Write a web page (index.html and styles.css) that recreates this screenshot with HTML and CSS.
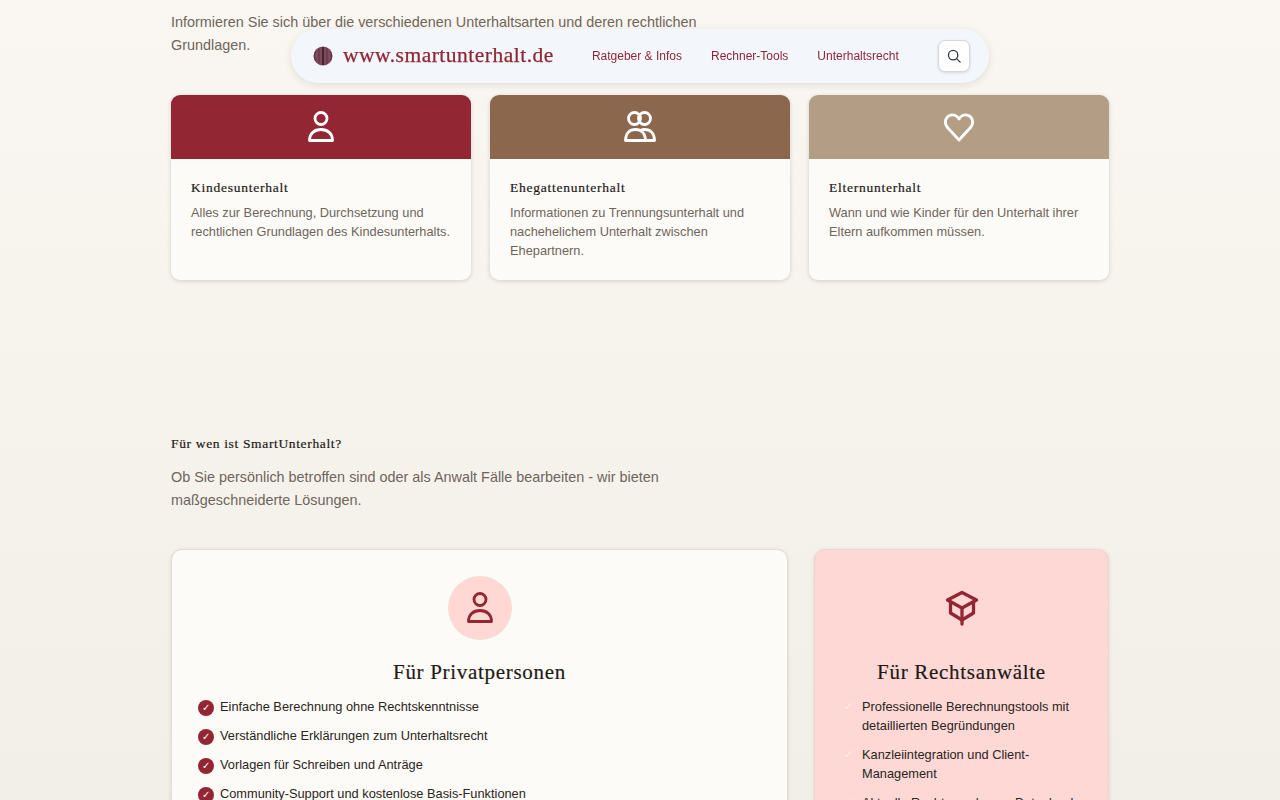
FILE: index.html
```html
<!DOCTYPE html>
<html lang="de">
<head>
    <meta charset="UTF-8">
    <meta name="viewport" content="width=device-width, initial-scale=1.0">
    <title>SmartUnterhalt</title>
    <link rel="stylesheet" href="styles.css">
</head>
<body>
    <div class="header">
        <a class="logo" href="#">
            <svg class="logo-icon" viewBox="0 0 20 20">
                <circle cx="10" cy="10" r="9.5" fill="#7d4a5c"/>
                <path d="M3 5a9 9 0 0 0 0 10M6 2.5v15M14 2.5v15M17 5a9 9 0 0 1 0 10" fill="none" stroke="#5f3145" stroke-width="1"/>
                <path d="M10 1v18" stroke="#2b1a20" stroke-width="1.4"/>
            </svg>
            <span class="logo-text">www.smartunterhalt.de</span>
        </a>
        <div class="menu">
            <a href="#">Ratgeber &amp; Infos</a>
            <a href="#">Rechner-Tools</a>
            <a href="#">Unterhaltsrecht</a>
        </div>
        <button class="search" type="button" aria-label="Suche">
            <svg viewBox="0 0 24 24" width="14" height="14" fill="none" stroke="#2f3542" stroke-width="2.2" stroke-linecap="round">
                <circle cx="10.5" cy="10.5" r="8"/>
                <path d="M16.5 16.5l6 6"/>
            </svg>
        </button>
    </div>

    <div class="container">
        <p class="lead lead-top">Informieren Sie sich über die verschiedenen Unterhaltsarten und deren rechtlichen Grundlagen.</p>

        <div class="topics">
            <div class="topic">
                <div class="topic-head red">
                    <svg class="icon-white" viewBox="0 0 32 32">
                        <circle cx="16" cy="7.500" r="6"/>
                        <path d="M4.500 29.500c0-7 5-11 11.500-11s11.500 4 11.500 11z"/>
                    </svg>
                </div>
                <div class="topic-body">
                    <h3>Kindesunterhalt</h3>
                    <p>Alles zur Berechnung, Durchsetzung und rechtlichen Grundlagen des Kindesunterhalts.</p>
                </div>
            </div>
            <div class="topic">
                <div class="topic-head brown">
                    <svg class="icon-white" viewBox="0 0 32 32">
                        <circle cx="10.500" cy="7.500" r="6"/>
                        <circle cx="20.500" cy="7.500" r="6"/>
                        <path d="M1.500 29.500c0-7 4-11 10-11s10 4 10 11z"/>
                        <path d="M16.500 19.500c1.300-.7 2.700-1 4-1 6 0 10 4 10 11h-9"/>
                    </svg>
                </div>
                <div class="topic-body">
                    <h3>Ehegattenunterhalt</h3>
                    <p>Informationen zu Trennungsunterhalt und nachehelichem Unterhalt zwischen Ehepartnern.</p>
                </div>
            </div>
            <div class="topic">
                <div class="topic-head sand">
                    <svg class="icon-white" viewBox="0 0 32 32">
                        <path d="M16 29 4.500 16.500C1 12.500 2 6.500 6.500 4.500c3.500-1.500 7.500-.3 9.500 3.500 2-3.800 6-5 9.500-3.500 4.500 2 5.500 8 2 12z"/>
                    </svg>
                </div>
                <div class="topic-body">
                    <h3>Elternunterhalt</h3>
                    <p>Wann und wie Kinder für den Unterhalt ihrer Eltern aufkommen müssen.</p>
                </div>
            </div>
        </div>

        <h4 class="section-title">Für wen ist SmartUnterhalt?</h4>
        <p class="lead">Ob Sie persönlich betroffen sind oder als Anwalt Fälle bearbeiten - wir bieten maßgeschneiderte Lösungen.</p>

        <div class="audience">
            <div class="panel panel-light">
                <div class="panel-icon round">
                    <svg class="icon-red" viewBox="0 0 32 32">
                        <circle cx="16" cy="7.500" r="6"/>
                        <path d="M4.500 29.500c0-7 5-11 11.500-11s11.500 4 11.500 11z"/>
                    </svg>
                </div>
                <h2>Für Privatpersonen</h2>
                <ul class="checks">
                    <li>Einfache Berechnung ohne Rechtskenntnisse</li>
                    <li>Verständliche Erklärungen zum Unterhaltsrecht</li>
                    <li>Vorlagen für Schreiben und Anträge</li>
                    <li>Community-Support und kostenlose Basis-Funktionen</li>
                </ul>
            </div>
            <div class="panel panel-pink">
                <div class="panel-icon">
                    <svg class="icon-cap" viewBox="0 0 36 36">
                        <path d="M18 2.500 3.500 10 18 18l14.500-8z"/>
                        <path d="M6.500 12v11l11.500 7 11.500-7V12"/>
                        <path d="M18 18v16"/>
                    </svg>
                </div>
                <h2>Für Rechtsanwälte</h2>
                <ul class="ticks">
                    <li>Professionelle Berechnungstools mit detaillierten Begründungen</li>
                    <li>Kanzleiintegration und Client-Management</li>
                    <li>Aktuelle Rechtsprechungs-Datenbank</li>
                </ul>
            </div>
        </div>
    </div>
</body>
</html>
```

FILE: styles.css
```css
html, body {
    height: 800px;
    overflow: hidden;
}
body {
    margin: 0;
    font-family: "Liberation Sans", Arial, sans-serif;
    background: linear-gradient(180deg, #faf7f2, #f2efe8);
    color: #1f1a17;
}
.header {
    position: fixed;
    top: 29px;
    left: 291px;
    width: 698px;
    height: 54px;
    box-sizing: border-box;
    padding: 0 19px 0 22px;
    display: flex;
    align-items: center;
    background: #f3f6fb;
    border-radius: 27px;
    box-shadow: 0px 2px 8px rgba(0, 0, 0, 0.1);
}
.logo {
    display: flex;
    align-items: center;
    gap: 10px;
    color: #8f2733;
    text-decoration: none;
    font-family: "Liberation Serif", serif;
    font-size: 21.500px;
    letter-spacing: 0.5px;
    -webkit-text-stroke: 0.25px #8f2733;
}
.logo-icon {
    width: 20px;
    height: 20px;
}
.logo-text {
    margin-top: -2px;
}
.menu {
    display: flex;
    gap: 29px;
    margin-left: 38px;
}
.menu a {
    color: #8f2733;
    text-decoration: none;
    font-size: 12px;
}
.search {
    margin-left: auto;
    width: 32px;
    height: 32px;
    padding: 0;
    display: flex;
    align-items: center;
    justify-content: center;
    background: #fff;
    border: 1px solid #d5d7dc;
    border-radius: 7px;
    box-shadow: 0px 1px 3px rgba(0, 0, 0, 0.12);
}
.container {
    width: 938px;
    margin: 0 auto;
    padding-top: 11px;
}
.lead {
    width: 560px;
    margin: 0;
    font-size: 14.400px;
    line-height: 22.500px;
    color: #6f655c;
}
.topics {
    display: grid;
    grid-template-columns: 300px 300px 300px;
    gap: 19px;
    margin-top: 39px;
}
.topic {
    height: 185px;
    background: #fdfbf7;
    border-radius: 9px;
    overflow: hidden;
    box-shadow: 0px 1px 4px rgba(0, 0, 0, 0.16);
}
.topic-head {
    height: 64px;
    display: flex;
    align-items: center;
    justify-content: center;
}
.red { background: #922733; }
.brown { background: #8b674d; }
.sand { background: #b39e85; }
.topic-body {
    padding: 21px 20px 0;
}
.topic-body h3 {
    margin: 0;
    font-family: "Liberation Serif", serif;
    font-size: 13.500px;
    font-weight: normal;
    line-height: 16px;
    letter-spacing: 0.75px;
    color: #1f1a17;
    -webkit-text-stroke: 0.2px #1f1a17;
}
.topic-body p {
    margin: 7px 0 0;
    font-size: 12.800px;
    line-height: 19px;
    color: #6f655c;
}
.icon-white, .icon-red, .icon-cap {
    width: 32px;
    height: 32px;
    fill: none;
    stroke-width: 2.800;
    stroke-linejoin: round;
    stroke-linecap: round;
}
.icon-white { stroke: #fff; }
.icon-red, .icon-cap { stroke: #922733; }
.icon-cap {
    width: 36px;
    height: 36px;
    stroke-width: 3.300;
}
.section-title {
    margin: 156px 0 0;
    font-family: "Liberation Serif", serif;
    font-size: 13.500px;
    font-weight: normal;
    line-height: 16px;
    letter-spacing: 0.65px;
    -webkit-text-stroke: 0.2px #1f1a17;
}
.section-title + .lead {
    margin-top: 14px;
}
.audience {
    display: grid;
    grid-template-columns: 617px 295px;
    gap: 26px;
    margin-top: 38px;
}
.panel {
    height: 400px;
    box-sizing: border-box;
    border-radius: 11px;
    padding: 26px 26px 0;
    box-shadow: 0px 1px 4px rgba(0, 0, 0, 0.1);
}
.panel-light {
    background: #fdfbf7;
    border: 1px solid #e3dcd0;
}
.panel-pink {
    background: #fdd8d5;
    border: 1px solid #f0d4cf;
    padding-left: 29px;
    padding-right: 29px;
}
.panel-icon {
    width: 64px;
    height: 64px;
    margin: 0 auto;
    display: flex;
    align-items: center;
    justify-content: center;
}
.round {
    background: #fdd8d5;
    border-radius: 50%;
}
.panel h2 {
    margin: 20px 0 0;
    text-align: center;
    font-family: "Liberation Serif", serif;
    font-size: 21px;
    font-weight: normal;
    line-height: 24px;
    letter-spacing: 0.7px;
    color: #1f1a17;
    -webkit-text-stroke: 0.2px #1f1a17;
}
.checks, .ticks {
    list-style: none;
    margin: 13px 0 0;
    padding: 0;
    font-size: 12.800px;
    line-height: 19px;
    color: #2a2522;
}
.checks li, .ticks li {
    position: relative;
    margin-bottom: 10px;
}
.checks li {
    padding-left: 22px;
}
.ticks li {
    padding-left: 18px;
}
.checks li::before {
    content: "✓";
    position: absolute;
    left: 0;
    top: 3px;
    width: 16px;
    height: 16px;
    border-radius: 50%;
    background: #922733;
    color: #fff;
    font-size: 10px;
    line-height: 16px;
    text-align: center;
}
.ticks li::before {
    content: "✓";
    position: absolute;
    left: 0;
    top: 0;
    color: #fdf3ef;
    font-size: 11px;
}
```
